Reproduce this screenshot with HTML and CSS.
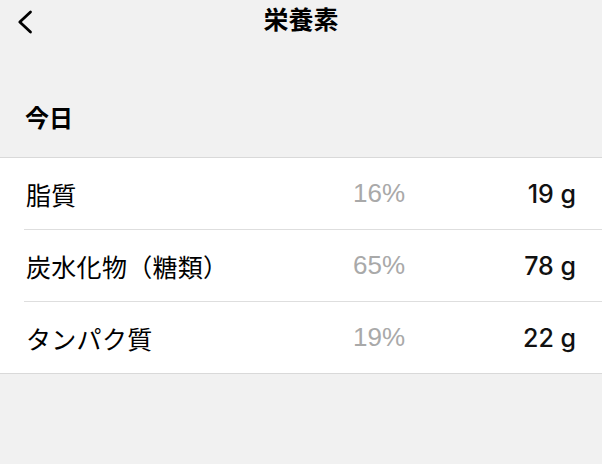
FILE: index.html
```html
<!DOCTYPE html>
<html lang="ja">
<head>
<meta charset="utf-8">
<title>栄養素</title>
<link rel="stylesheet" href="styles.css">
</head>
<body>
<header class="nav">
  <button class="nav-back" aria-label="戻る">
    <svg width="16" height="24" viewBox="0 0 16 24">
      <polyline points="13.5,2 2.8,12 13.5,22" fill="none" stroke="#000" stroke-width="2.8" stroke-linecap="round" stroke-linejoin="round"/>
    </svg>
  </button>
  <h1 class="nav-title">栄養素</h1>
  <span></span>
</header>

<h2 class="section-title">今日</h2>

<ul class="nutrients">
  <li class="nutrient">
    <span class="nutrient-name">脂質</span>
    <span class="nutrient-pct">16%</span>
    <span class="nutrient-amount">19 g</span>
  </li>
  <li class="nutrient">
    <span class="nutrient-name">炭水化物（糖類）</span>
    <span class="nutrient-pct">65%</span>
    <span class="nutrient-amount">78 g</span>
  </li>
  <li class="nutrient">
    <span class="nutrient-name">タンパク質</span>
    <span class="nutrient-pct">19%</span>
    <span class="nutrient-amount">22 g</span>
  </li>
</ul>
</body>
</html>
```

FILE: styles.css
```css
* {
  box-sizing: border-box;
}

body {
  margin: 0;
  background: #f1f1f1;
  color: #000;
  font-family: "Liberation Sans", "Noto Sans CJK JP", sans-serif;
}

.nav {
  display: grid;
  grid-template-columns: 1fr auto 1fr;
  align-items: center;
  height: 44px;
}

.nav-back {
  justify-self: start;
  display: flex;
  padding: 0 0 0 17px;
  margin: 0;
  border: 0;
  background: none;
}

.nav-title {
  margin: 0;
  font-size: 25px;
  line-height: 40px;
  font-weight: 700;
  padding-bottom: 4px;
}

.section-title {
  margin: 0;
  padding: 58px 0 21px 25px;
  font-size: 24px;
  line-height: 34px;
  font-weight: 700;
}

.nutrients {
  list-style: none;
  margin: 0;
  padding: 0;
  background: #fff;
  border-top: 1px solid #d9d9d9;
  border-bottom: 1px solid #d9d9d9;
}

.nutrient {
  display: grid;
  grid-template-columns: 329px 1fr auto;
  align-items: center;
  height: 72px;
  margin-left: 24px;
  padding-right: 26px;
  border-bottom: 1px solid #dedede;
  font-size: 25px;
}

.nutrient:last-child {
  height: 71px;
  border-bottom: 0;
}

.nutrient-name {
  padding-left: 2px;
  letter-spacing: 0.3px;
}

.nutrient-pct {
  color: #a9a9a9;
  font-size: 26px;
}

.nutrient-amount {
  font-family: Inter, "Liberation Sans", sans-serif;
  font-weight: 500;
  font-size: 25px;
  color: #111;
}
```
